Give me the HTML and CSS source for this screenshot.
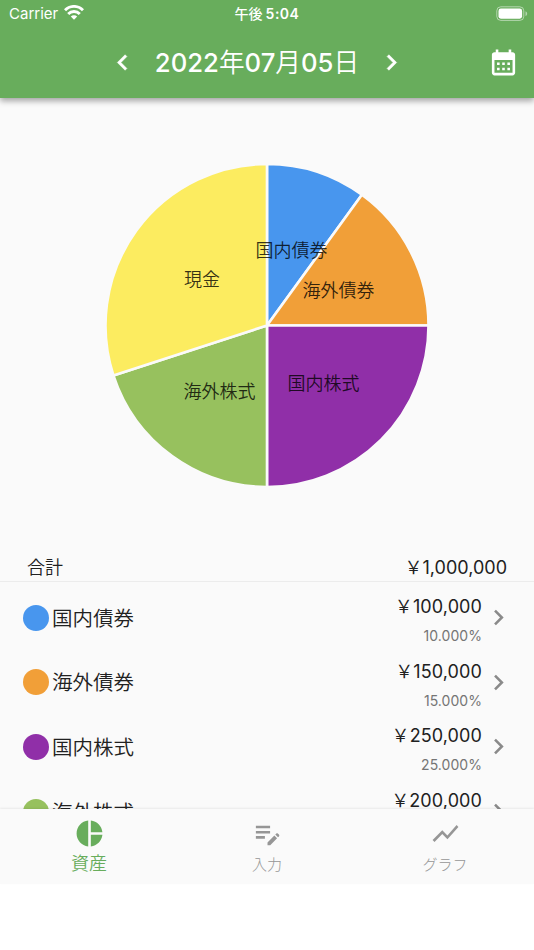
FILE: index.html
```html
<!DOCTYPE html>
<html lang="ja">
<head>
<meta charset="utf-8">
<title>資産</title>
<link rel="stylesheet" href="styles.css">
</head>
<body>
<div class="app">
  <header class="header">
    <div class="status">
      <div class="carrier"><span>Carrier</span>
        <svg class="wifi" width="20" height="15" viewBox="0 0 20 15" fill="none" stroke="#fff" stroke-width="2.900"><path d="M1 5.2a12.6 12.6 0 0 1 18 0M4.2 8.9a8.1 8.1 0 0 1 11.6 0"/><path d="M10 14.8l-3.2-3.2a4.6 4.6 0 0 1 6.4 0z" fill="#fff" stroke="none"/></svg>
      </div>
      <div class="clock">午後<span class="time">5:04</span></div>
      <div class="battery">
        <svg width="32" height="16" viewBox="0 0 32 16"><rect x=".8" y=".8" width="27" height="13.6" rx="4" fill="none" stroke="#fff" stroke-opacity=".5"/><rect x="2.5" y="2.5" width="23.6" height="10.2" rx="2.4" fill="#fff"/><path d="M29.5 5.2c2.2.8 2.2 4 0 4.8z" fill="#fff" fill-opacity=".5"/></svg>
      </div>
    </div>
    <div class="toolbar">
      <svg class="icon" viewBox="0 0 24 24"><path stroke="#fff" stroke-width=".4" d="M15.41 7.41L14 6l-6 6 6 6 1.41-1.41L10.83 12z"/></svg>
      <h1 class="date"><b>2022</b>年<b>07</b>月<b>05</b>日</h1>
      <svg class="icon" viewBox="0 0 24 24"><path stroke="#fff" stroke-width=".4" d="M10 6L8.59 7.41 13.17 12l-4.58 4.59L10 18l6-6z"/></svg>
      <svg class="icon calendar" viewBox="0 0 24 24"><path d="M19 4h-1V2h-2v2H8V2H6v2H5c-1.11 0-1.99.9-1.99 2L3 20c0 1.1.89 2 2 2h14c1.1 0 2-.9 2-2V6c0-1.1-.9-2-2-2zm0 16H5V10h14v10zM9 14H7v-2h2v2zm4 0h-2v-2h2v2zm4 0h-2v-2h2v2zm-8 4H7v-2h2v2zm4 0h-2v-2h2v2zm4 0h-2v-2h2v2z"/></svg>
    </div>
  </header>

  <main class="content">
    <svg class="chart" width="534" height="456" viewBox="0 98 534 456">
      <g stroke="#fafafa" stroke-width="2.6" stroke-linejoin="bevel">
        <path fill="#4896ee" d="M267 325.5V164a161.5 161.5 0 0 1 94.9 30.8z"/>
        <path fill="#f19f38" d="M267 325.5l94.9-130.7A161.5 161.5 0 0 1 428.5 325.5z"/>
        <path fill="#902fa8" d="M267 325.5h161.5A161.5 161.5 0 0 1 267 487z"/>
        <path fill="#97c15e" d="M267 325.5V487a161.5 161.5 0 0 1-153.6-111.6z"/>
        <path fill="#fcec60" d="M267 325.5l-153.6 49.9A161.5 161.5 0 0 1 267 164z"/>
      </g>
      <g class="labels">
        <text x="291.500" y="256.500">国内債券</text>
        <text x="338.500" y="296.500">海外債券</text>
        <text x="323.500" y="389.500">国内株式</text>
        <text x="219.500" y="397.500">海外株式</text>
        <text x="202" y="286">現金</text>
      </g>
    </svg>
    <div class="total"><span>合計</span><span class="sum"><i class="yen">￥</i>1,000,000</span></div>
    <ul class="list">
      <li class="row"><span class="dot blue"></span><span class="name">国内債券</span><div class="values"><div class="amount"><i class="yen">￥</i>100,000</div><div class="percent">10.000%</div></div><svg class="icon" viewBox="0 0 24 24"><path d="M10 6L8.59 7.41 13.17 12l-4.58 4.59L10 18l6-6z"/></svg></li>
      <li class="row"><span class="dot orange"></span><span class="name">海外債券</span><div class="values"><div class="amount"><i class="yen">￥</i>150,000</div><div class="percent">15.000%</div></div><svg class="icon" viewBox="0 0 24 24"><path d="M10 6L8.59 7.41 13.17 12l-4.58 4.59L10 18l6-6z"/></svg></li>
      <li class="row"><span class="dot purple"></span><span class="name">国内株式</span><div class="values"><div class="amount"><i class="yen">￥</i>250,000</div><div class="percent">25.000%</div></div><svg class="icon" viewBox="0 0 24 24"><path d="M10 6L8.59 7.41 13.17 12l-4.58 4.59L10 18l6-6z"/></svg></li>
      <li class="row"><span class="dot green"></span><span class="name">海外株式</span><div class="values"><div class="amount"><i class="yen">￥</i>200,000</div><div class="percent">20.000%</div></div><svg class="icon" viewBox="0 0 24 24"><path d="M10 6L8.59 7.41 13.17 12l-4.58 4.59L10 18l6-6z"/></svg></li>
    </ul>
  </main>

  <nav class="tabs">
    <a class="tab active"><svg class="icon" viewBox="0 0 24 24"><path d="M11 2v20c-5.07-.5-9-4.79-9-10s3.93-9.5 9-10zm2.03 0v8.99H22c-.47-4.74-4.24-8.52-8.97-8.99zm0 11.01V22c4.74-.47 8.500-4.25 8.970-8.990h-8.970z"/></svg><span>資産</span></a>
    <a class="tab"><svg class="icon" viewBox="0 0 24 24"><path d="M3 10h11v2H3v-2zm0-2h11V6H3v2zm0 8h7v-2H3v2zm15.01-3.13.71-.71c.39-.39 1.02-.39 1.41 0l.71.71c.39.39.39 1.02 0 1.41l-.71.71-2.12-2.12zm-.71.71-5.3 5.3V21h2.12l5.3-5.3-2.12-2.12z"/></svg><span>入力</span></a>
    <a class="tab"><svg class="icon" viewBox="0 0 24 24"><path d="M3.5 18.49l6-6.01 4 4L22 6.92l-1.41-1.41-7.090 7.970-4-4L2 16.99z"/></svg><span>グラフ</span></a>
  </nav>
</div>
</body>
</html>
```
FILE: styles.css
```css
* { box-sizing: border-box; }
body {
  margin: 0;
  background: #fff;
  color: #212121;
  font-family: Inter, "Noto Sans CJK JP", sans-serif;
  font-weight: 350;
}
.app { width: 534px; height: 950px; display: flex; flex-direction: column; overflow: hidden; }
.icon { width: 31px; height: 31px; fill: currentColor; flex: none; display: block; }

.header {
  height: 98px;
  flex: none;
  background: #68ad5c;
  color: #fff;
  box-shadow: 0 3px 6px rgba(0, 0, 0, .35);
  z-index: 1;
}
.status {
  height: 26px;
  display: grid;
  grid-template-columns: 1fr auto 1fr;
  align-items: center;
  padding: 0 6px 0 9px;
  font-size: 15px;
  line-height: 26px;
}
.carrier { display: flex; align-items: center; gap: 6px; font-size: 15px; font-weight: 400; padding-top: 1px; }
.wifi { margin-top: -3px; }
.clock { font-weight: 500; font-size: 14px; margin-left: -3px; }
.time { margin-left: 3px; font-weight: 600; letter-spacing: .5px; }
.battery { display: flex; justify-content: flex-end; }
.toolbar {
  height: 72px;
  display: grid;
  grid-template-columns: 31px 238px 31px 31px;
  align-items: center;
  padding-left: 107px;
}
.date { margin: 1px 0 0; text-align: center; font-size: 25.700px; font-weight: 350; line-height: 36px; white-space: nowrap; }
.date b { font-weight: 500; }
.calendar { margin-left: 80.500px; }

.content { height: 711px; flex: none; overflow: hidden; background: #fafafa; }
.chart { display: block; }
.labels { font-size: 18px; text-anchor: middle; fill: #000; fill-opacity: .8; }
.total {
  height: 28px;
  display: flex;
  justify-content: space-between;
  padding: 0 27px;
  border-bottom: 1px solid #ececec;
  font-size: 18px;
  line-height: 27px;
}
.sum, .amount { font-weight: 400; }
.yen { font-style: normal; font-weight: 350; }
.list { margin: 0; padding: 4px 0 0; list-style: none; }
.row { height: 64.600px; display: flex; align-items: center; padding: 0 20.500px 0 23px; }
.dot { width: 26px; height: 26px; border-radius: 50%; margin-top: -1px; }
.blue { background: #4896ee; }
.orange { background: #f19f38; }
.purple { background: #902fa8; }
.green { background: #97c15e; }
.name { flex: 1; margin-left: 3px; font-size: 20.500px; line-height: 30px; padding-top: 1px; }
.values { text-align: right; margin-right: .5px; }
.amount { font-size: 18px; line-height: 28px; margin-top: 3px; letter-spacing: .1px; }
.percent { font-size: 14px; line-height: 20px; margin-top: 5px; color: #757575; font-weight: 400; letter-spacing: .05px; }
.row .icon { color: #8a8a8a; margin-top: -1px; }

.tabs {
  height: 75px;
  flex: none;
  display: grid;
  grid-template-columns: repeat(3, 1fr);
  background: #fafafa;
  box-shadow: 0 -1px 2px rgba(0, 0, 0, .07);
  z-index: 1;
}
.tab { display: flex; flex-direction: column; align-items: center; padding-top: 9px; color: #969696; font-size: 15px; font-weight: 300; line-height: 32px; }
.active { color: #68ad5c; font-size: 18px; font-weight: 350; line-height: 30px; }
```
